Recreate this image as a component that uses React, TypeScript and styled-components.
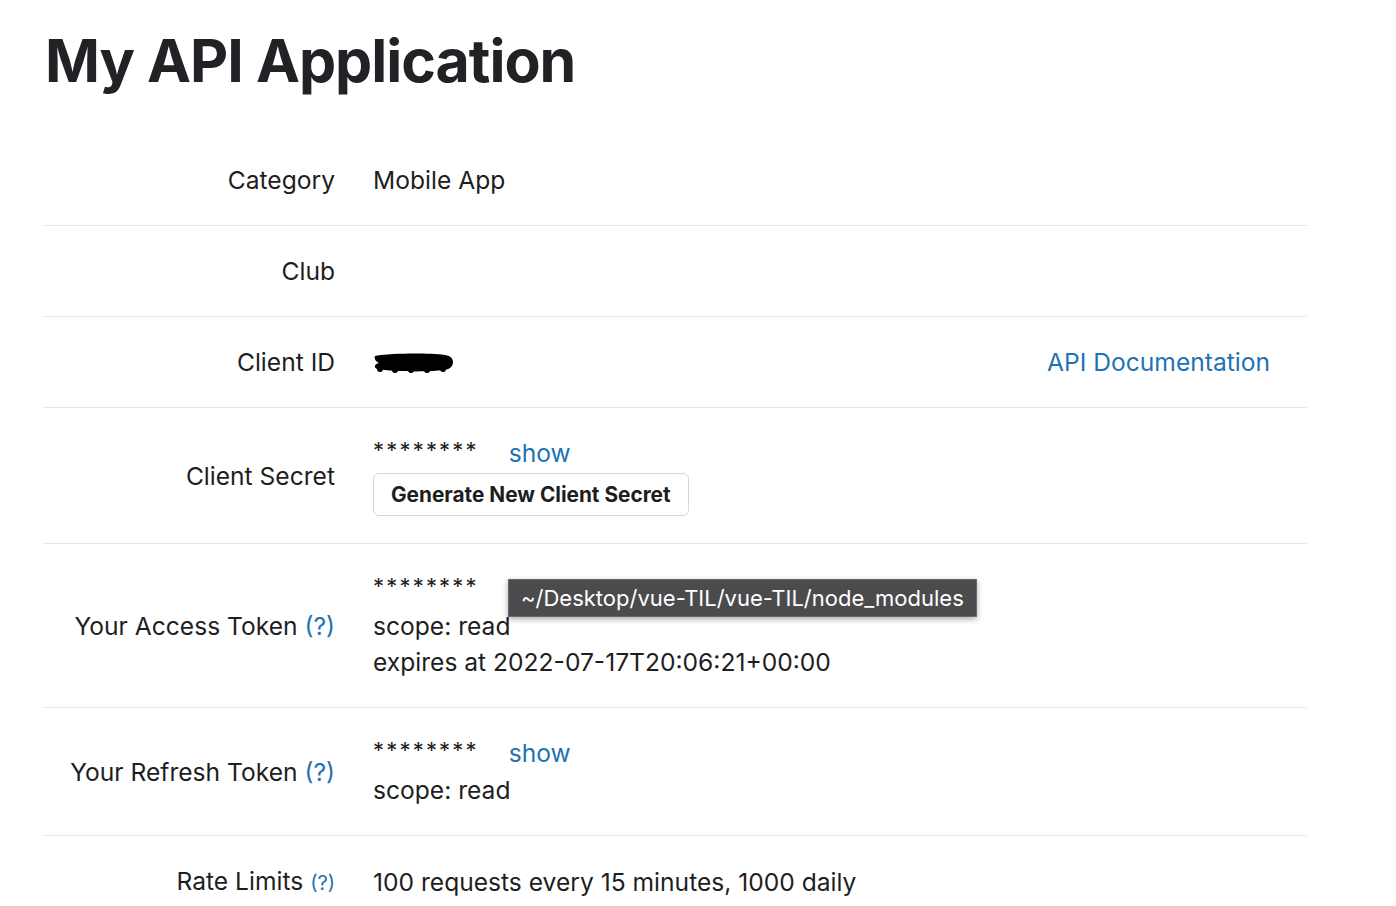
import React from "react";
import styled, { createGlobalStyle } from "styled-components";

const Global = createGlobalStyle`
  html, body { margin: 0; padding: 0; background: #fff; }
  body { font-family: Inter, "Noto Sans", sans-serif; color: #1e1e1e; }
`;

const Page = styled.div`
  padding: 26px 89px 0 43px;
`;

const Title = styled.h1`
  margin: 0 0 0 2px;
  font-size: 59px;
  line-height: 70px;
  font-weight: 700;
  letter-spacing: -1px;
  color: #222226;
  height: 109px;
`;

const Table = styled.div`
  display: flex;
  flex-direction: column;
`;

const Row = styled.div<{ $last?: boolean }>`
  display: grid;
  grid-template-columns: 292px 1fr;
  column-gap: 38px;
  align-items: center;
  padding: 27px 37px 27px 0;
  border-bottom: ${(p) => (p.$last ? "none" : "1px solid #e6e6ea")};
  font-size: 24.6px;
  line-height: 36px;
`;

const Label = styled.div`
  text-align: right;
  white-space: nowrap;
`;

const Value = styled.div`
  display: flex;
  flex-direction: column;
  position: relative;
  min-height: 36px;
`;

const Line = styled.div`
  display: flex;
  align-items: center;
  justify-content: space-between;
`;

const Inline = styled.div`
  display: flex;
  align-items: baseline;
  gap: 30px;
`;

const Stars = styled.span`
  font-size: 22px;
  letter-spacing: 2.2px;
  position: relative;
  top: -4px;
`;

const Link = styled.a<{ $small?: boolean }>`
  color: #1f72b3;
  text-decoration: none;
  font-size: ${(p) => (p.$small ? "20px" : "inherit")};
`;

const Button = styled.button`
  align-self: flex-start;
  margin-top: 1px;
  height: 43px;
  padding: 0 17px;
  border: 1.5px solid #d7d7dc;
  border-radius: 6px;
  background: #fff;
  font-family: Inter, "Noto Sans", sans-serif;
  font-size: 20.8px;
  font-weight: 700;
  color: #1e1e1e;
`;

const Tooltip = styled.div`
  position: absolute;
  left: 135px;
  top: 8px;
  padding: 0 12px;
  height: 36px;
  line-height: 36px;
  background: #4b4b4d;
  color: #fff;
  font-size: 22px;
  white-space: nowrap;
  box-shadow: 0 2px 6px rgba(0, 0, 0, 0.35);
  border: 1px solid #6a6a6a;
`;

const Redacted = () => (
  <svg width="82" height="24" viewBox="0 0 82 24">
    <path
      d="M2 6 C20 3 55 3 72 5 C78 6 80 9 80 12 C80 16 77 20 70 20 C60 22 20 22 4 19 C0 17 2 14 6 13 C2 11 1 8 2 6 Z"
      fill="#000"
    />
    <circle cx="7" cy="19" r="3" fill="#000" />
    <circle cx="22" cy="20" r="3" fill="#000" />
    <circle cx="38" cy="20" r="3" fill="#000" />
    <circle cx="54" cy="20" r="3" fill="#000" />
    <circle cx="70" cy="19" r="3" fill="#000" />
  </svg>
);

export default function App() {
  return (
    <>
      <Global />
      <Page>
        <Title>My API Application</Title>
        <Table>
          <Row>
            <Label>Category</Label>
            <Value>Mobile App</Value>
          </Row>
          <Row>
            <Label>Club</Label>
            <Value />
          </Row>
          <Row>
            <Label>Client ID</Label>
            <Value>
              <Line>
                <Redacted />
                <Link href="#">API Documentation</Link>
              </Line>
            </Value>
          </Row>
          <Row>
            <Label>Client Secret</Label>
            <Value>
              <Inline>
                <Stars>********</Stars>
                <Link href="#">show</Link>
              </Inline>
              <Button>Generate New Client Secret</Button>
            </Value>
          </Row>
          <Row>
            <Label>
              Your Access Token <Link href="#">(?)</Link>
            </Label>
            <Value>
              <Inline>
                <Stars>********</Stars>
                <Link href="#">show</Link>
              </Inline>
              <div>scope: read</div>
              <div>expires at 2022-07-17T20:06:21+00:00</div>
              <Tooltip>~/Desktop/vue-TIL/vue-TIL/node_modules</Tooltip>
            </Value>
          </Row>
          <Row>
            <Label>
              Your Refresh Token <Link href="#">(?)</Link>
            </Label>
            <Value>
              <Inline>
                <Stars>********</Stars>
                <Link href="#">show</Link>
              </Inline>
              <div>scope: read</div>
            </Value>
          </Row>
          <Row $last>
            <Label>
              Rate Limits <Link href="#" $small>(?)</Link>
            </Label>
            <Value>100 requests every 15 minutes, 1000 daily</Value>
          </Row>
        </Table>
      </Page>
    </>
  );
}
